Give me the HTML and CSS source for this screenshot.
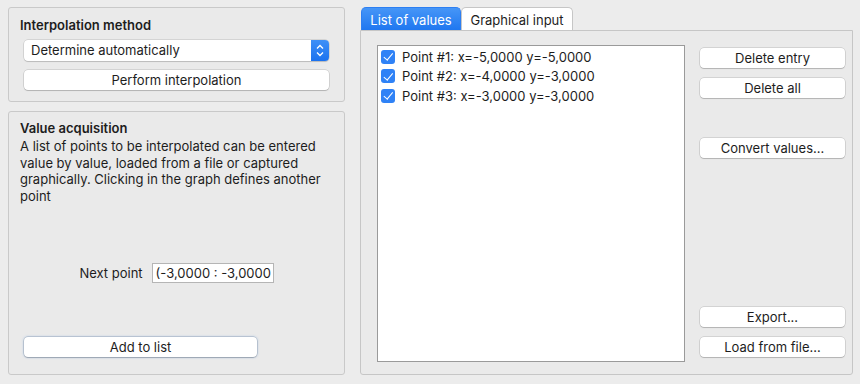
FILE: index.html
```html
<!DOCTYPE html>
<html lang="en">
<head>
  <meta charset="UTF-8">
  <title>Interpolation</title>
  <link rel="stylesheet" href="styles.css">
</head>
<body>
  <div class="window">
    <div class="left-col">
      <div class="group method">
        <div class="group-title">Interpolation method</div>
        <div class="combo">
          <span class="combo-text">Determine automatically</span>
          <span class="combo-arrow">
            <svg viewBox="0 0 18 21" width="18" height="21">
              <path d="M6 8.5 L9 5.5 L12 8.5" fill="none" stroke="#fff" stroke-width="1.3"/>
              <path d="M6 12.5 L9 15.5 L12 12.5" fill="none" stroke="#fff" stroke-width="1.3"/>
            </svg>
          </span>
        </div>
        <button class="btn wide">Perform interpolation</button>
      </div>
      <div class="group acquisition">
        <div class="group-title">Value acquisition</div>
        <p class="description">A list of points to be interpolated can be entered value by value, loaded from a file or captured graphically. Clicking in the graph defines another point</p>
        <div class="next-row">
          <label class="next-label">Next point</label>
          <div class="text-input">(-3,0000 : -3,0000</div>
        </div>
        <button class="btn add-btn">Add to list</button>
      </div>
    </div>
    <div class="right-col">
      <div class="tabs">
        <div class="tab active">List of values</div>
        <div class="tab">Graphical input</div>
      </div>
      <div class="pane">
        <div class="list">
          <div class="list-item"><span class="check"></span>Point #1: x=-5,0000 y=-5,0000</div>
          <div class="list-item"><span class="check"></span>Point #2: x=-4,0000 y=-3,0000</div>
          <div class="list-item"><span class="check"></span>Point #3: x=-3,0000 y=-3,0000</div>
        </div>
        <div class="actions">
          <button class="btn">Delete entry</button>
          <button class="btn">Delete all</button>
          <button class="btn convert">Convert values...</button>
          <div class="spacer"></div>
          <button class="btn">Export...</button>
          <button class="btn">Load from file...</button>
        </div>
      </div>
    </div>
  </div>
</body>
</html>
```

FILE: styles.css
```css
body {
  margin: 0;
  background: #ececec;
  font-family: Inter, 'Liberation Sans', sans-serif;
  font-size: 13px;
  color: #1d1d1d;
}
.window {
  display: flex;
  gap: 15px;
  padding: 7px 7px 9px 8px;
  height: 368px;
}
.left-col {
  width: 337px;
  flex-shrink: 0;
  display: flex;
  flex-direction: column;
  gap: 9px;
}
.group {
  border: 1px solid #c9c9c9;
  border-radius: 3px;
  background: #eaeaea;
  box-sizing: border-box;
}
.method {
  height: 95px;
  padding: 9px 15px 0 15px;
}
.acquisition {
  flex: 1;
  padding: 8px 15px 17px 11px;
  display: flex;
  flex-direction: column;
}
.group-title {
  font-weight: 600;
  line-height: 16px;
  margin-bottom: 2px;
}
.method .group-title {
  margin-left: -4px;
}
.combo {
  display: flex;
  height: 21px;
  margin-top: 7px;
  background: #fff;
  border-radius: 4px;
  box-shadow: 0 0 0 0.5px rgba(0,0,0,0.18), 0 1px 1px rgba(0,0,0,0.12);
}
.combo-text {
  flex: 1;
  padding-left: 7px;
  line-height: 21px;
}
.combo-arrow {
  width: 18px;
  background: linear-gradient(#3f90f7, #1b72ef);
  border-radius: 0 4px 4px 0;
  display: flex;
}
.btn {
  font-family: inherit;
  font-size: 13px;
  color: #1d1d1d;
  background: #fff;
  border: none;
  border-radius: 4px;
  height: 20px;
  padding: 0;
  box-shadow: 0 0 0 0.5px rgba(0,0,0,0.2), 0 1px 1px rgba(0,0,0,0.15);
  display: block;
}
.wide {
  width: 100%;
  margin-top: 9px;
}
.description {
  margin: 0;
  line-height: 16.5px;
  width: 312px;
}
.next-row {
  display: flex;
  align-items: center;
  justify-content: center;
  gap: 9px;
  margin-top: 59px;
  margin-left: 4px;
}
.text-input {
  width: 117px;
  height: 18px;
  border: 1px solid #b5b5b5;
  background: #fff;
  line-height: 18px;
  padding-left: 3px;
  box-sizing: content-box;
  white-space: nowrap;
}
.add-btn {
  width: 233px;
  margin-top: auto;
  margin-left: 4px;
  box-shadow: 0 0 0 0.5px rgba(0,0,0,0.2), 0 1px 1px rgba(0,0,0,0.15), 0 0 2px 1px rgba(120,170,230,0.35);
}
.right-col {
  flex: 1;
  min-width: 0;
  display: flex;
  flex-direction: column;
}
.tabs {
  display: flex;
  padding-left: 1px;
  height: 23px;
}
.tab {
  box-sizing: border-box;
  height: 23px;
  padding: 3px 0 0 0;
  background: #fff;
  border: 1px solid #c6c6c6;
  border-bottom: none;
  border-radius: 5px 5px 0 0;
  line-height: 18px;
  white-space: nowrap;
  text-align: center;
}
.tab.active {
  width: 100px;
  background: linear-gradient(#4696f7, #1f77f0);
  border-color: #2d7ff2;
  color: #fff;
}
.tab + .tab {
  width: 112px;
}
.pane {
  flex: 1;
  display: flex;
  gap: 15px;
  border: 1px solid #c6c6c6;
  border-radius: 0 0 3px 3px;
  background: #eaeaea;
  padding: 14px 7px 12px 16px;
}
.list {
  width: 308px;
  box-sizing: border-box;
  background: #fff;
  border: 1px solid #9a9a9a;
  padding: 1px 0 0 3px;
}
.list-item {
  display: flex;
  align-items: center;
  height: 19.5px;
  gap: 7px;
}
.check {
  width: 14px;
  height: 14px;
  border-radius: 3px;
  background: #2f82f6;
  position: relative;
}
.check::after {
  content: "";
  position: absolute;
  left: 4.5px;
  top: 1.5px;
  width: 3.5px;
  height: 7.5px;
  border: solid #fff;
  border-width: 0 1.6px 1.6px 0;
  transform: rotate(40deg);
}
.actions {
  width: 145px;
  display: flex;
  flex-direction: column;
  padding-top: 3px;
  padding-bottom: 5px;
}
.actions .btn {
  width: 100%;
  margin-bottom: 10px;
}
.actions .btn:last-child {
  margin-bottom: 0;
}
.actions .convert {
  margin-top: 30px;
}
.spacer {
  flex: 1;
}
```
